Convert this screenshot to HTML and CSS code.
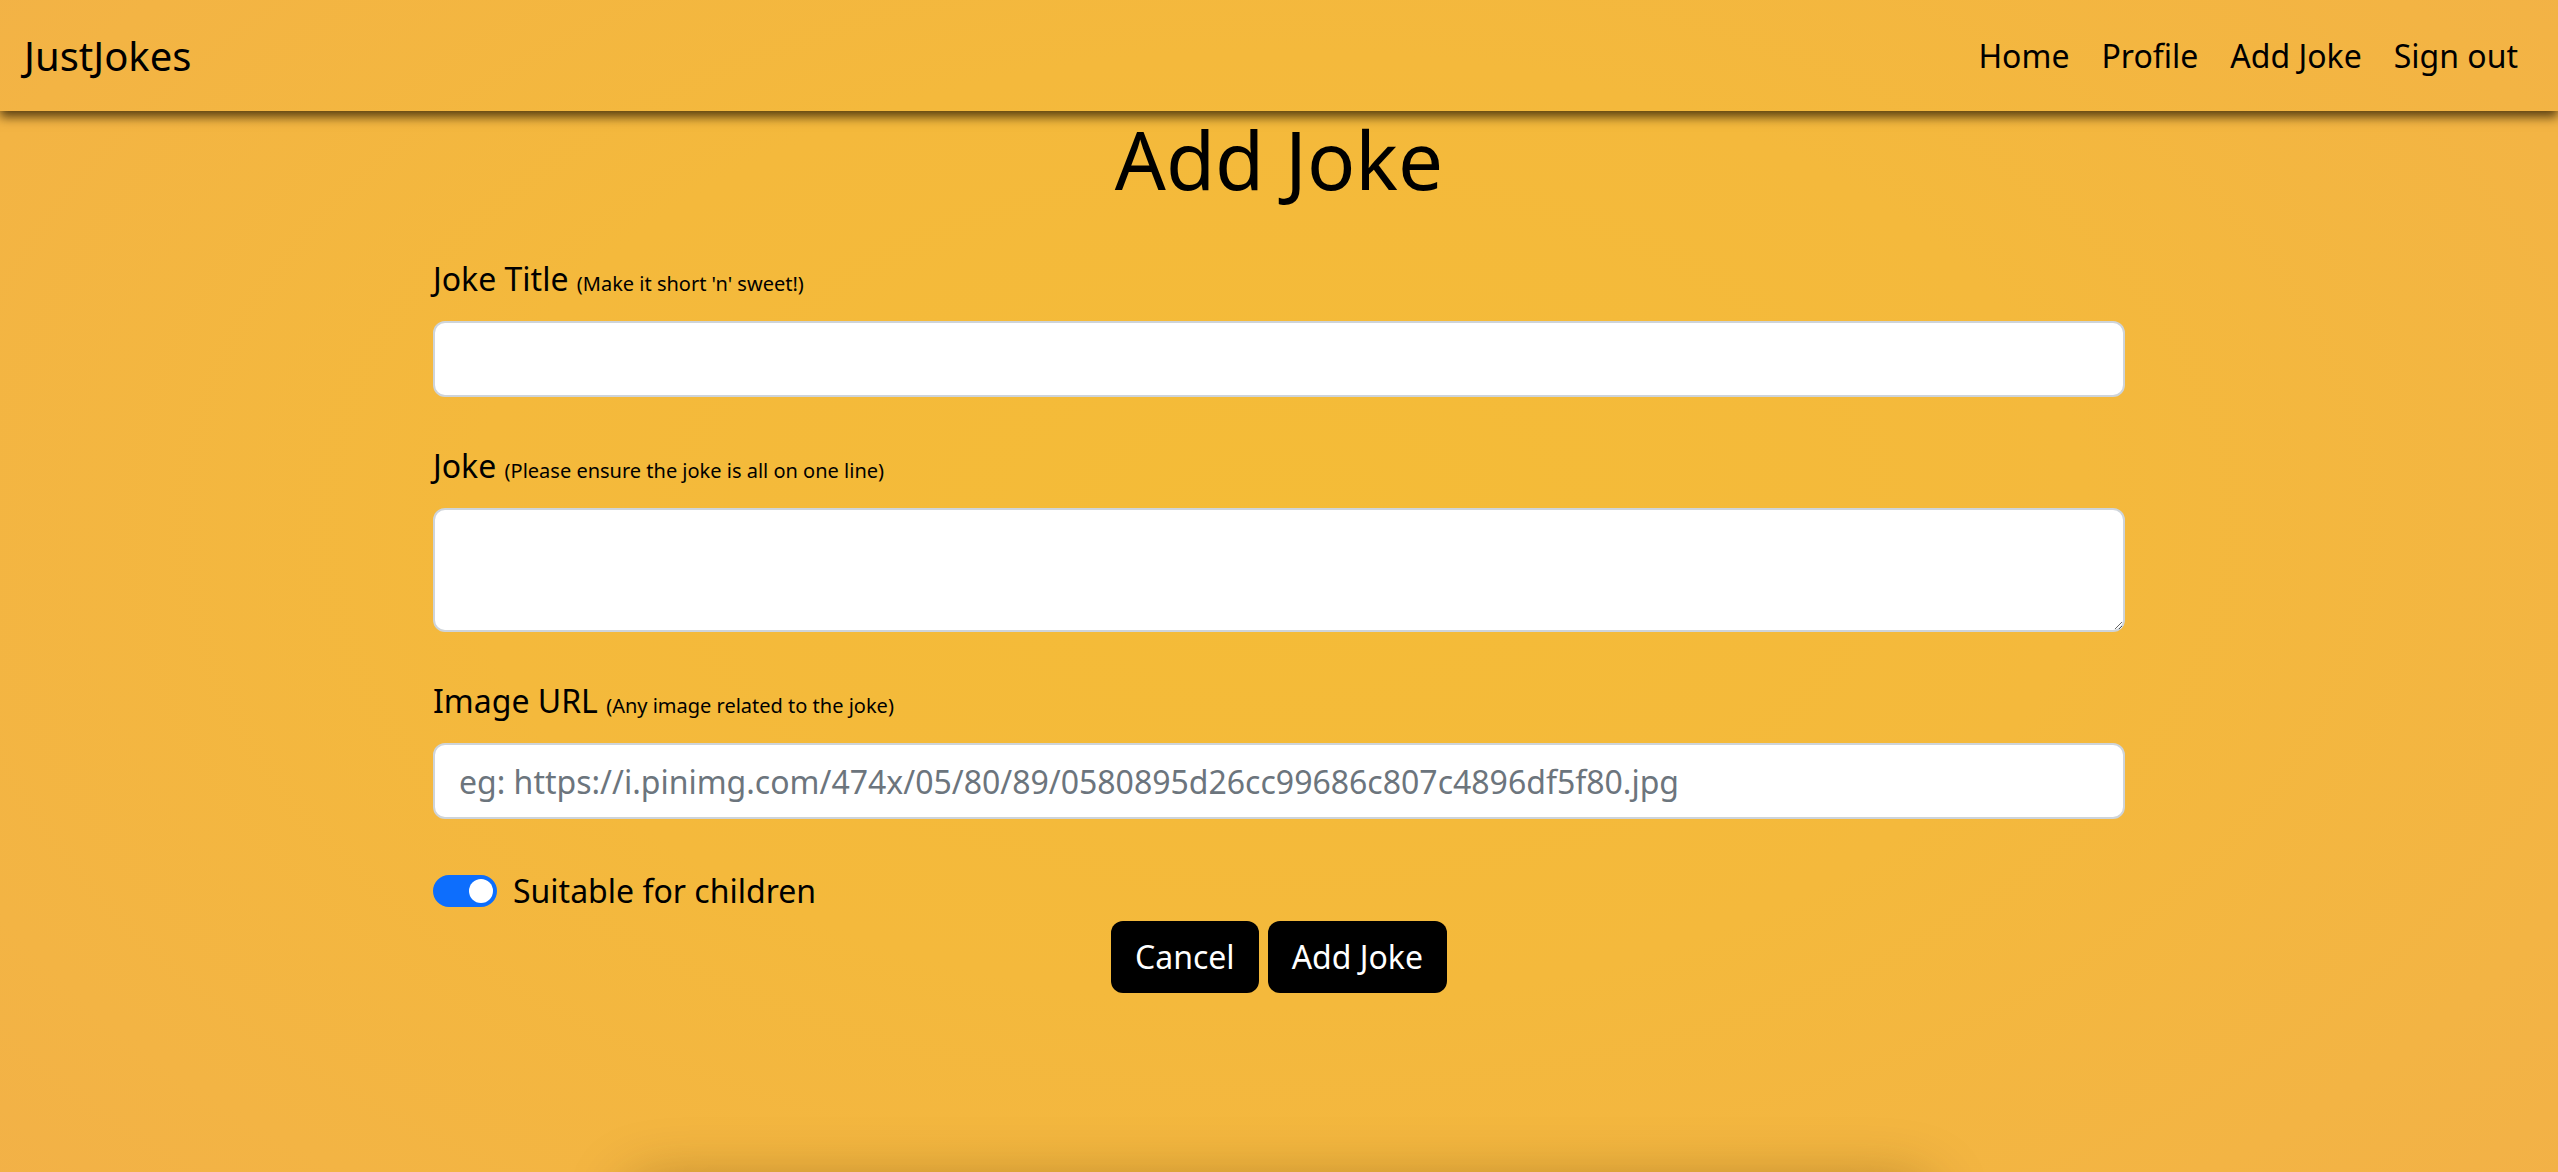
FILE: index.html
```html
<!DOCTYPE html>
<html lang="en">
<head>
<meta charset="utf-8">
<title>JustJokes - Add Joke</title>
<link rel="stylesheet" href="styles.css">
</head>
<body>
<nav class="navbar">
  <a class="brand" href="#">JustJokes</a>
  <ul class="nav-links">
    <li><a href="#">Home</a></li>
    <li><a href="#">Profile</a></li>
    <li><a href="#">Add Joke</a></li>
    <li><a href="#">Sign out</a></li>
  </ul>
</nav>
<main class="page">
  <h1 class="page-title">Add Joke</h1>
  <form class="joke-form">
    <div class="field">
      <label class="field-label" for="title">Joke Title <small class="hint">(Make it short 'n' sweet!)</small></label>
      <input class="control" id="title" type="text">
    </div>
    <div class="field">
      <label class="field-label" for="joke">Joke <small class="hint">(Please ensure the joke is all on one line)</small></label>
      <textarea class="control control-area" id="joke"></textarea>
    </div>
    <div class="field">
      <label class="field-label" for="img">Image URL <small class="hint">(Any image related to the joke)</small></label>
      <input class="control" id="img" type="text" placeholder="eg: https://i.pinimg.com/474x/05/80/89/0580895d26cc99686c807c4896df5f80.jpg">
    </div>
    <div class="switch-row">
      <span class="switch"></span>
      <span class="switch-label">Suitable for children</span>
    </div>
    <div class="actions">
      <button type="button" class="btn">Cancel</button>
      <button type="button" class="btn">Add Joke</button>
    </div>
  </form>
  <div class="below-card"></div>
</main>
</body>
</html>
```
FILE: styles.css
```css
html, body {
  margin: 0;
  padding: 0;
}
body {
  font-family: "Noto Sans", "Open Sans", sans-serif;
  color: #000;
  min-height: 1172px;
  background: radial-gradient(ellipse 70% 90% at 50% 45%, #f4bc37 0%, #f4b93c 45%, #f3b444 80%, #f2b048 100%);
  background-attachment: fixed;
  overflow: hidden;
}
.navbar {
  display: flex;
  justify-content: space-between;
  align-items: center;
  padding: 16px 24px 15px;
  box-shadow: 0 6px 10px rgba(40, 25, 0, 0.75);
  position: relative;
  z-index: 1;
}
.brand {
  font-size: 40px;
  line-height: 60px;
  padding: 10px 0;
  color: #000;
  text-decoration: none;
}
.nav-links {
  display: flex;
  list-style: none;
  margin: 0;
  padding: 0;
}
.nav-links a {
  display: block;
  font-size: 32px;
  line-height: 48px;
  padding: 8px 16px;
  color: #000;
  text-decoration: none;
}
.page {
  width: 1692px;
  margin: 0 auto;
}
.page-title {
  margin: 0 0 48px;
  font-size: 80px;
  line-height: 96px;
  font-weight: 400;
  text-align: center;
}
.joke-form {
  display: flex;
  flex-direction: column;
}
.field {
  display: flex;
  flex-direction: column;
  margin-bottom: 45px;
}
.field-label {
  font-size: 32px;
  line-height: 48px;
  margin-bottom: 13px;
}
.hint {
  font-size: 20px;
}
.control {
  box-sizing: border-box;
  width: 100%;
  height: 76px;
  margin: 0;
  padding: 12px 24px;
  font-family: inherit;
  font-size: 32px;
  line-height: 48px;
  color: #212529;
  background: #fff;
  border: 2px solid #ced4da;
  border-radius: 12px;
  outline: none;
}
.control::placeholder {
  color: #6c757d;
  opacity: 1;
}
.control-area {
  height: 124px;
  resize: vertical;
  display: block;
}
.switch-row {
  display: flex;
  align-items: flex-start;
  margin-top: 3px;
  margin-bottom: 6px;
}
.switch {
  position: relative;
  box-sizing: border-box;
  width: 64px;
  height: 32px;
  margin-top: 8px;
  border-radius: 32px;
  background: #0d6efd;
  border: 2px solid #0d6efd;
  flex: none;
}
.switch::after {
  content: "";
  position: absolute;
  top: 2px;
  right: 2px;
  width: 24px;
  height: 24px;
  border-radius: 50%;
  background: #fff;
}
.switch-label {
  margin-left: 16px;
  font-size: 32px;
  line-height: 48px;
}
.actions {
  display: flex;
  justify-content: center;
  gap: 9px;
}
.btn {
  font-family: inherit;
  font-size: 32px;
  line-height: 48px;
  padding: 12px 24px;
  color: #fff;
  background: #000;
  border: 0;
  border-radius: 12px;
  cursor: pointer;
}
.below-card {
  width: 1300px;
  height: 300px;
  margin: 190px auto 0;
  box-shadow: 0 0 60px rgba(60, 35, 0, 0.35);
  border-radius: 24px;
}
```
